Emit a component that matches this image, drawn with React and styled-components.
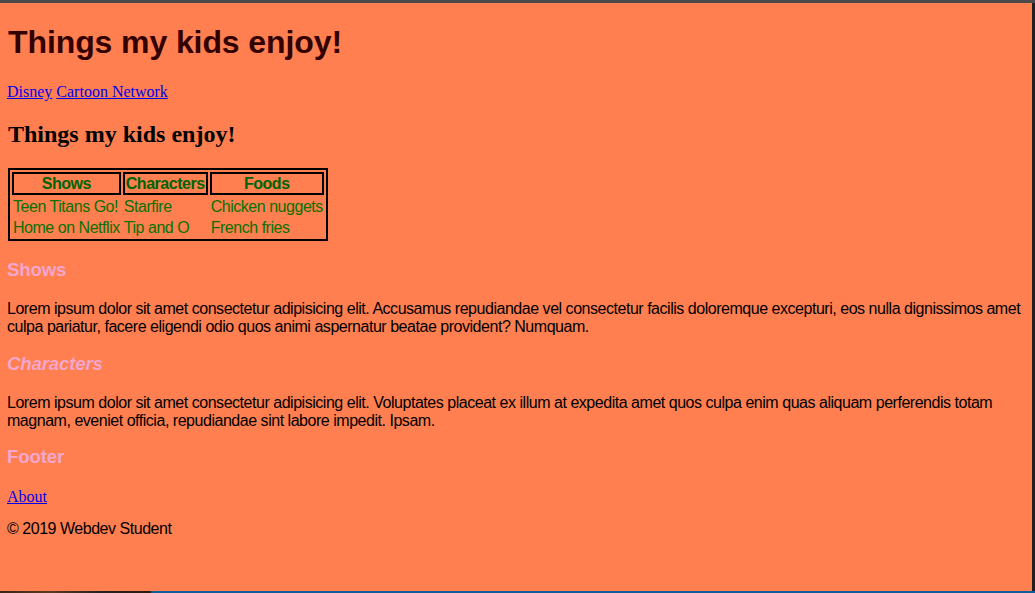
import React from 'react';
import styled, { createGlobalStyle } from 'styled-components';

const GlobalStyle = createGlobalStyle`
  html, body {
    margin: 0;
    padding: 0;
    background: #262626;
    overflow: hidden;
  }
  body {
    font-family: "Liberation Serif", "Times New Roman", serif;
  }
`;

const Frame = styled.div`
  display: flex;
  flex-direction: column;
  width: 1035px;
  height: 593px;
  border-top: 3px solid #4a4a4a;
  box-sizing: border-box;
`;

const Middle = styled.div`
  display: flex;
  height: 588px;
`;

const Window = styled.div`
  display: flow-root;
  width: 1032px;
  height: 588px;
  box-sizing: border-box;
  padding: 0 8px 0 7px;
  background-color: coral;
  overflow: hidden;
`;

const Edge = styled.div`
  flex: 1;
  background: #1f1f1f;
`;

const Desktop = styled.div`
  flex: 1;
  background: linear-gradient(to right, #3a2414 0, #5a3a20 50px, #222 100px, #2a1a10 150px, #0f5c9a 152px, #0f5c9a 100%);
`;

const Title = styled.h1`
  font-family: "Liberation Sans", Arial, sans-serif;
  font-size: 32px;
  line-height: 37px;
  margin: 21.44px 0 21.44px 1px;
  color: #330000;
  letter-spacing: -0.1px;
`;

const Nav = styled.p`
  margin: 16px 0 ${(p) => (p.$tall ? '13px' : '16px')};
  font-size: 16px;
  line-height: ${(p) => (p.$tall ? '20px' : '18px')};

  a {
    color: #0000ee;
  }
`;

const Subtitle = styled.h2`
  font-size: 24px;
  line-height: 27px;
  margin: 19.92px 0 19.92px 1px;
  color: #000;
`;

const Table = styled.table`
  border: 2px solid #000;
  margin: 0 0 19.72px 1px;
  font-family: "Liberation Sans", Arial, sans-serif;
  font-size: 16px;
  line-height: 17px;
  letter-spacing: -0.47px;
  color: #0a7000;
`;

const Th = styled.th`
  border: 2px solid #000;
  padding: 1px;
  color: #006400;
`;

const Td = styled.td`
  padding: 1px;
`;

const SectionHeading = styled.h3`
  font-family: "Liberation Sans", Arial, sans-serif;
  font-size: 18.72px;
  line-height: 20px;
  margin: 17.72px 0 19.72px;
  color: #f4a6cb;
  letter-spacing: -0.2px;
  font-style: ${(p) => (p.$italic ? 'italic' : 'normal')};
`;

const Text = styled.p`
  font-family: "Liberation Sans", Arial, sans-serif;
  font-size: 16px;
  line-height: 18px;
  margin: ${(p) => (p.$tight ? '13px' : '16px')} 0 16px;
  color: #000;
  letter-spacing: -0.47px;
`;

const rows = [
  ['Teen Titans Go!', 'Starfire', 'Chicken nuggets'],
  ['Home on Netflix', 'Tip and O', 'French fries'],
];

const App = () => (
  <>
    <GlobalStyle />
    <Frame>
      <Middle>
        <Window>
          <Title>Things my kids enjoy!</Title>
          <Nav>
            <a href="#disney">Disney</a> <a href="#cn">Cartoon Network</a>
          </Nav>
          <Subtitle>Things my kids enjoy!</Subtitle>
          <Table>
            <thead>
              <tr>
                <Th>Shows</Th>
                <Th>Characters</Th>
                <Th>Foods</Th>
              </tr>
            </thead>
            <tbody>
              {rows.map((r) => (
                <tr key={r[0]}>
                  {r.map((c) => (
                    <Td key={c}>{c}</Td>
                  ))}
                </tr>
              ))}
            </tbody>
          </Table>
          <SectionHeading>Shows</SectionHeading>
          <Text>
            Lorem ipsum dolor sit amet consectetur adipisicing elit. Accusamus repudiandae vel consectetur facilis doloremque excepturi, eos nulla dignissimos amet culpa pariatur, facere eligendi odio quos animi aspernatur beatae provident? Numquam.
          </Text>
          <SectionHeading $italic>Characters</SectionHeading>
          <Text>
            Lorem ipsum dolor sit amet consectetur adipisicing elit. Voluptates placeat ex illum at expedita amet quos culpa enim quas aliquam perferendis totam magnam, eveniet officia, repudiandae sint labore impedit. Ipsam.
          </Text>
          <SectionHeading>Footer</SectionHeading>
          <Nav $tall>
            <a href="#about">About</a>
          </Nav>
          <Text $tight>© 2019 Webdev Student</Text>
        </Window>
        <Edge />
      </Middle>
      <Desktop />
    </Frame>
  </>
);

export default App;
